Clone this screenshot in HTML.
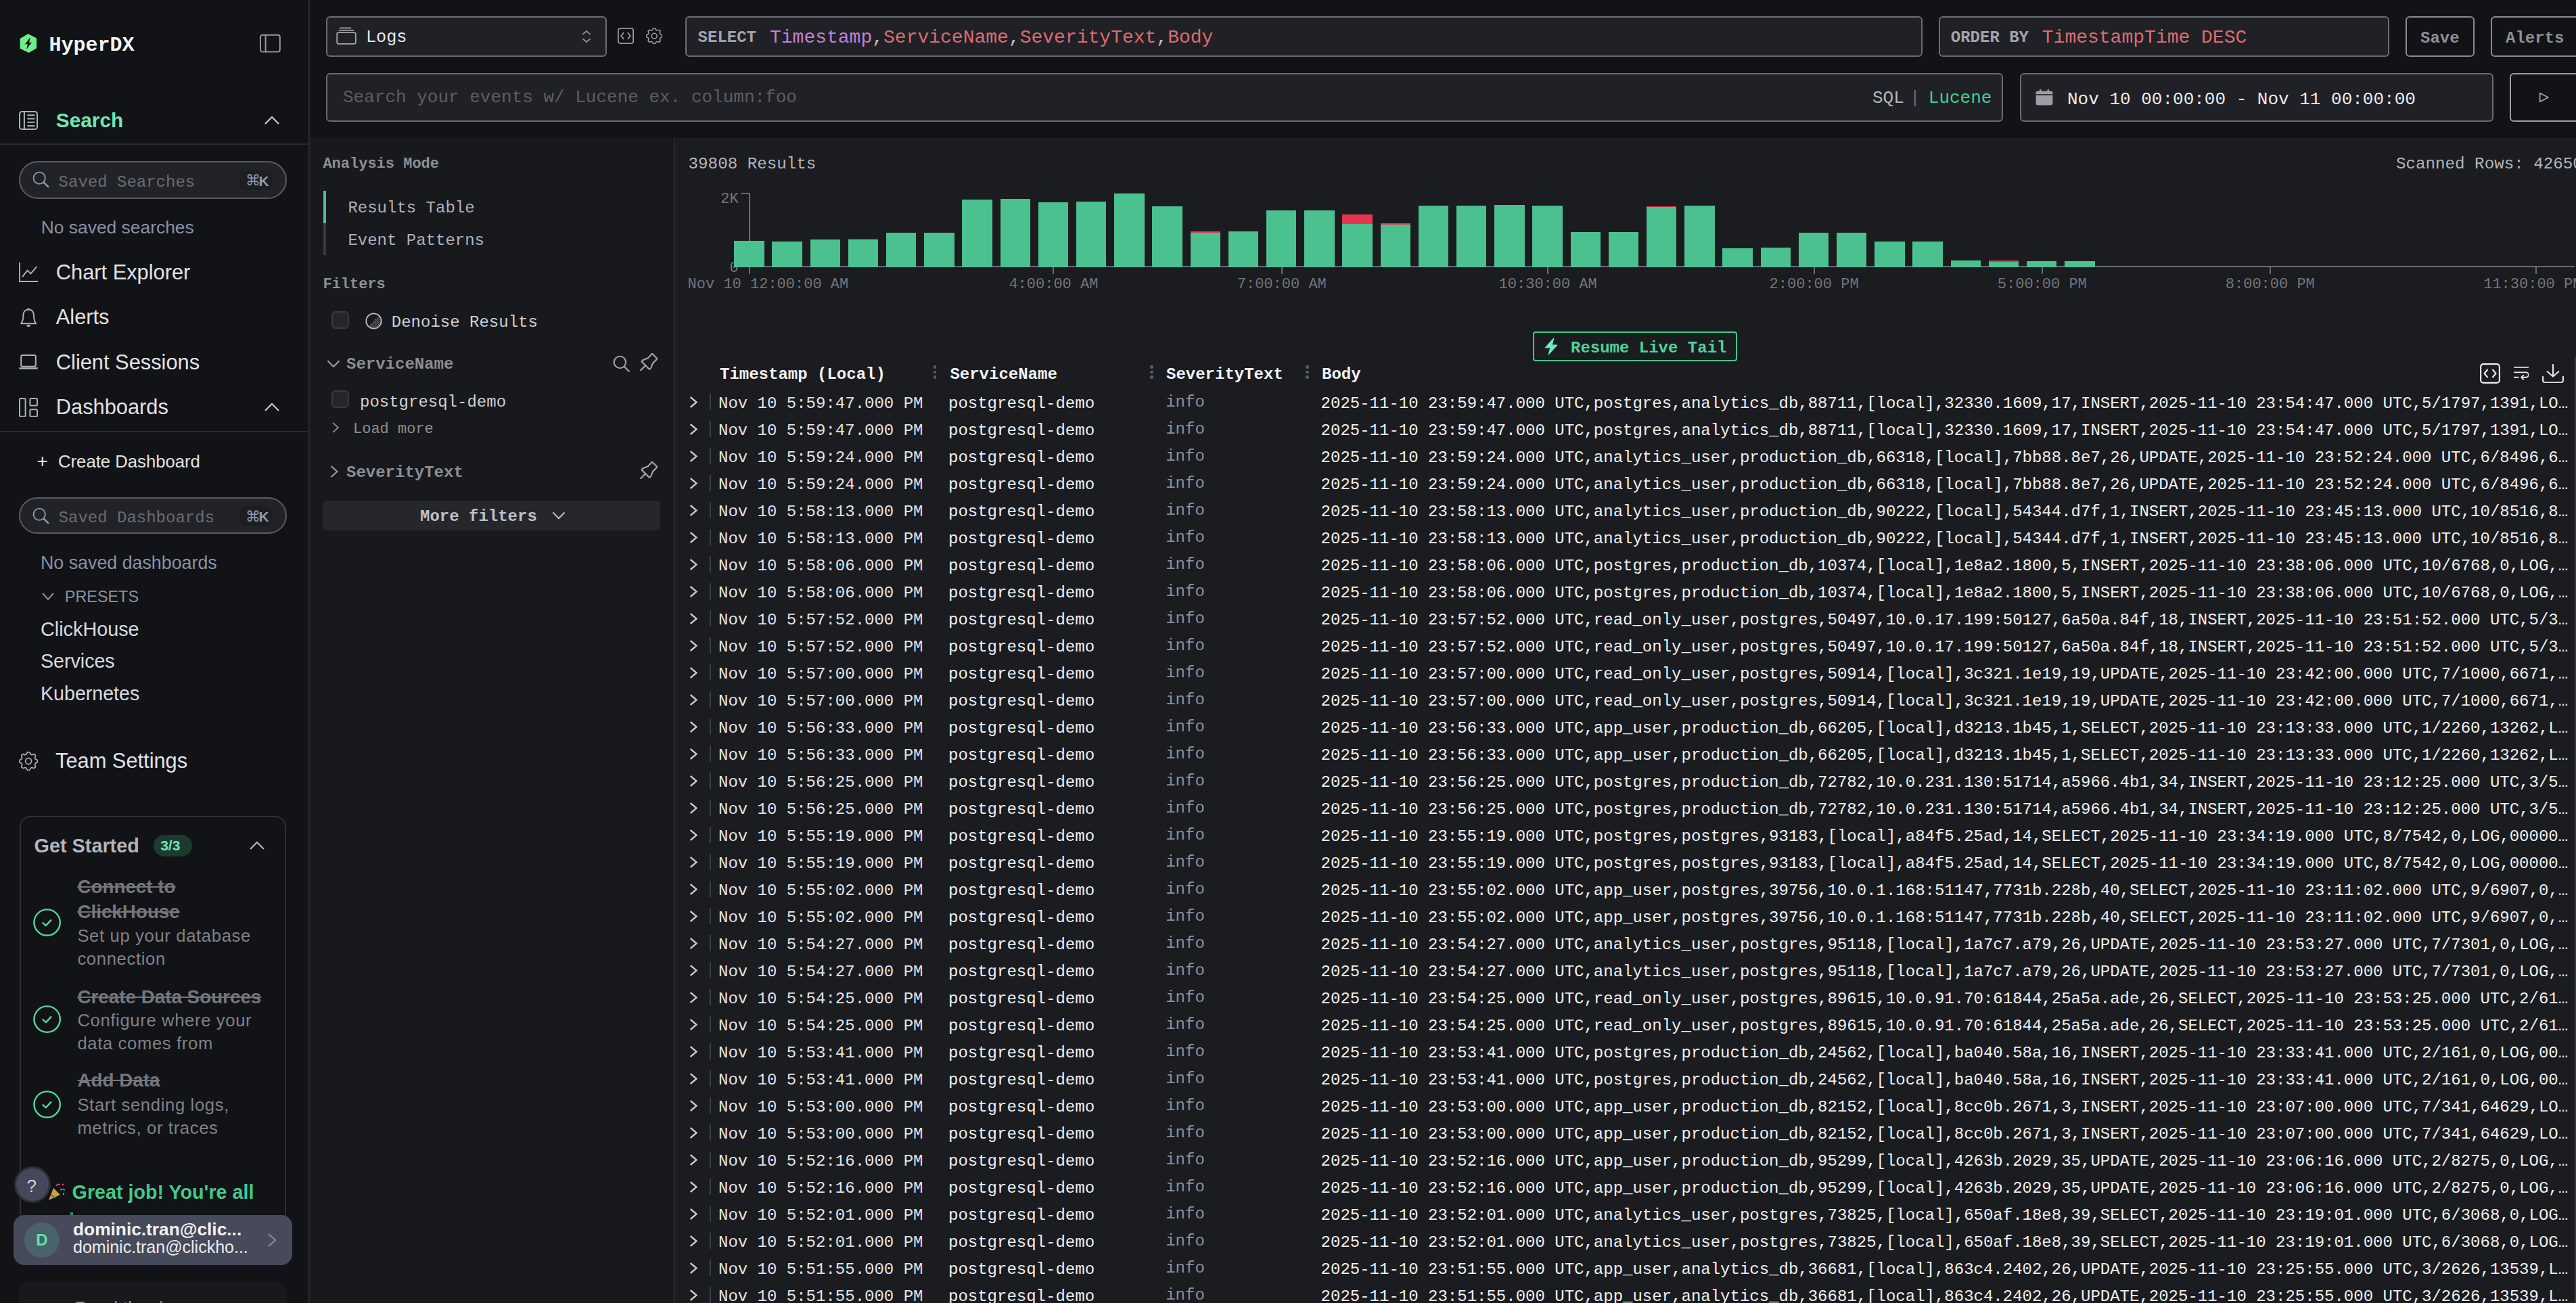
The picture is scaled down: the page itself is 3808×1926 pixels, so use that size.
<!DOCTYPE html>
<html><head><meta charset="utf-8">
<style>
*{box-sizing:border-box;margin:0;padding:0}
html,body{width:3808px;height:1926px;overflow:hidden;background:#121316}
#root{zoom:2;width:1904px;height:963px;position:relative;overflow:hidden;background:#121316;font-family:"Liberation Sans",sans-serif;color:#e6e6e8}
.a{position:absolute}
.t{position:absolute;white-space:nowrap;line-height:1}
@media (max-width:2800px){html,body{width:1904px;height:963px}#root{zoom:1}}
</style></head>
<body><div id="root">

<div class="a" style="left:0.00px;top:0.00px;width:229.00px;height:963.00px;background:#121316"></div>
<div class="a" style="left:228.00px;top:0.00px;width:1.00px;height:963.00px;background:#2a2b30"></div>
<div class="a" style="left:229.00px;top:102.00px;width:1675.00px;height:861.00px;background:#18191c"></div>
<div class="a" style="left:498.50px;top:102.00px;width:1405.50px;height:861.00px;background:#1b1c1f"></div>
<div class="a" style="left:497.80px;top:102.00px;width:1.00px;height:861.00px;background:#2a2b30"></div>
<svg class="a" style="left:14.00px;top:24.00px;" width="14.00" height="16.00" viewBox="14 24 14 16" fill="none"><polygon points="20.82,24.95 27.03,28.29 27.03,35.65 21.28,38.99 14.83,35.88 14.83,28.52" fill="#6fee8a"/><polygon points="22.43,27.48 18.40,32.78 20.47,32.55 19.55,36.46 23.47,31.28 21.51,31.51" fill="#111214"/></svg>
<div class="t " style="left:36.30px;top:25.91px;font-size:15px;font-family:'Liberation Mono',monospace;font-weight:700;color:#f4f4f6;">HyperDX</div>
<svg class="a" style="left:191.00px;top:24.00px;" width="18.00" height="16.00" viewBox="0 0 18 16" fill="none"><rect x="1.5" y="1.9" width="14.4" height="12.4" rx="1.4" stroke="#9a9ba3" stroke-width="0.95"/><line x1="5.3" y1="1.9" x2="5.3" y2="14.3" stroke="#9a9ba3" stroke-width="0.95"/></svg>
<svg class="a" style="left:14.00px;top:82.00px;" width="14.00" height="14.00" viewBox="0 0 14 14" fill="none"><rect x="0.5" y="0.5" width="13" height="13" rx="1.8" stroke="#aab1bd" stroke-width="1"/><line x1="3.95" y1="0.5" x2="3.95" y2="13.5" stroke="#aab1bd" stroke-width="1"/><line x1="6.6" y1="3.1" x2="11.3" y2="3.1" stroke="#aab1bd" stroke-width="1" stroke-linecap="round"/><line x1="6.6" y1="5.7" x2="11.3" y2="5.7" stroke="#aab1bd" stroke-width="1" stroke-linecap="round"/><line x1="6.6" y1="8.4" x2="11.3" y2="8.4" stroke="#aab1bd" stroke-width="1" stroke-linecap="round"/><line x1="6.6" y1="11.0" x2="11.3" y2="11.0" stroke="#aab1bd" stroke-width="1" stroke-linecap="round"/></svg>
<div class="t " style="left:41.40px;top:81.69px;font-size:14.9px;font-family:'Liberation Sans',sans-serif;font-weight:700;color:#6ee7b7;">Search</div>
<svg class="a" style="left:195.00px;top:85.50px;" width="12.00" height="7.00" viewBox="0 0 12 7" fill="none"><polyline points="1,6 6.0,1 11,6" stroke="#d0d0d4" stroke-width="1" fill="none"/></svg>
<div class="a" style="left:0.00px;top:106.00px;width:228.00px;height:1.00px;background:#2a2b30"></div>
<div class="a" style="left:14.20px;top:119.10px;width:197.60px;height:27.90px;background:#222328;border:1px solid #5c5b65;border-radius:14px"></div>
<svg class="a" style="left:24.20px;top:126.70px;" width="12.50" height="12.50" viewBox="0 0 12.5 12.5" fill="none"><circle cx="5.1" cy="5.1" r="4.3" stroke="#8d9cb0" stroke-width="0.9"/><line x1="8.3" y1="8.3" x2="11.6" y2="11.6" stroke="#8d9cb0" stroke-width="1.3" stroke-linecap="round"/></svg>
<div class="t " style="left:43.30px;top:128.91px;font-size:12px;font-family:'Liberation Mono',monospace;color:#6a6b72;">Saved Searches</div>
<div class="a" style="left:177.20px;top:125.80px;width:23.70px;height:14.80px;background:#1d1e22;border-radius:4px"></div>
<div class="t " style="left:181.30px;top:128.09px;font-size:11px;font-family:'Liberation Sans',sans-serif;color:#8d9cb0;">⌘</div>
<div class="t " style="left:191.20px;top:128.51px;font-size:10.5px;font-family:'Liberation Sans',sans-serif;font-weight:700;color:#8d9cb0;">K</div>
<div class="t " style="left:30.40px;top:161.33px;font-size:13.2px;font-family:'Liberation Sans',sans-serif;color:#8891a7;">No saved searches</div>
<svg class="a" style="left:14.00px;top:194.00px;" width="14.00" height="14.50" viewBox="0 0 16 16.5" fill="none"><path d="M0.5 0 V16 H16" stroke="#aab1bd" stroke-width="1.1" fill="none"/><polyline points="2.8,12.2 7.2,6.6 9.9,9.4 15,3.4" stroke="#aab1bd" stroke-width="1.1" fill="none" stroke-linejoin="round"/></svg>
<div class="t " style="left:41.40px;top:193.96px;font-size:15.4px;font-family:'Liberation Sans',sans-serif;color:#e2e2e6;">Chart Explorer</div>
<svg class="a" style="left:15.00px;top:227.40px;" width="12.20" height="14.20" viewBox="0 0 12.2 14.2" fill="none"><path d="M6.1 1.2 C3.4 1.2 2.2 3.3 2.2 5.6 C2.2 8.4 1.6 10.3 0.6 11.6 H11.6 C10.6 10.3 10 8.4 10 5.6 C10 3.3 8.8 1.2 6.1 1.2 Z" stroke="#aab1bd" stroke-width="1" fill="none" stroke-linejoin="round"/><circle cx="6.1" cy="0.9" r="0.8" fill="#aab1bd"/><path d="M4.6 12.6 A1.5 1.5 0 0 0 7.6 12.6 Z" fill="#aab1bd"/></svg>
<div class="t " style="left:41.40px;top:227.16px;font-size:15.4px;font-family:'Liberation Sans',sans-serif;color:#e2e2e6;">Alerts</div>
<svg class="a" style="left:14.00px;top:262.00px;" width="14.00" height="11.50" viewBox="0 0 14 11.5" fill="none"><rect x="1.6" y="0.5" width="10.8" height="8.4" rx="1" stroke="#aab1bd" stroke-width="1" fill="none"/><path d="M0 9.6 H14 A1.2 1.2 0 0 1 12.8 10.9 H1.2 A1.2 1.2 0 0 1 0 9.6Z" fill="#aab1bd"/></svg>
<div class="t " style="left:41.40px;top:260.36px;font-size:15.4px;font-family:'Liberation Sans',sans-serif;color:#e2e2e6;">Client Sessions</div>
<svg class="a" style="left:14.00px;top:293.80px;" width="14.00" height="14.40" viewBox="0 0 14 14.4" fill="none"><rect x="0.5" y="0.5" width="4.3" height="13.4" rx="0.8" stroke="#aab1bd" stroke-width="1" fill="none"/><rect x="8.2" y="0.5" width="5.3" height="5.3" rx="0.8" stroke="#aab1bd" stroke-width="1" fill="none"/><rect x="8.2" y="8.6" width="5.3" height="5.3" rx="0.8" stroke="#aab1bd" stroke-width="1" fill="none"/></svg>
<div class="t " style="left:41.40px;top:293.66px;font-size:15.4px;font-family:'Liberation Sans',sans-serif;color:#e2e2e6;">Dashboards</div>
<svg class="a" style="left:195.00px;top:297.70px;" width="12.00" height="7.00" viewBox="0 0 12 7" fill="none"><polyline points="1,6 6.0,1 11,6" stroke="#d0d0d4" stroke-width="1" fill="none"/></svg>
<div class="a" style="left:0.00px;top:318.40px;width:228.00px;height:1.00px;background:#2a2b30"></div>
<div class="t " style="left:27.20px;top:334.15px;font-size:14px;font-family:'Liberation Sans',sans-serif;color:#e2e2e6;">+</div>
<div class="t " style="left:43.00px;top:335.12px;font-size:12.85px;font-family:'Liberation Sans',sans-serif;color:#e2e2e6;">Create Dashboard</div>
<div class="a" style="left:14.20px;top:367.30px;width:197.60px;height:27.40px;background:#222328;border:1px solid #5c5b65;border-radius:14px"></div>
<svg class="a" style="left:24.20px;top:374.90px;" width="12.50" height="12.50" viewBox="0 0 12.5 12.5" fill="none"><circle cx="5.1" cy="5.1" r="4.3" stroke="#8d9cb0" stroke-width="0.9"/><line x1="8.3" y1="8.3" x2="11.6" y2="11.6" stroke="#8d9cb0" stroke-width="1.3" stroke-linecap="round"/></svg>
<div class="t " style="left:43.30px;top:377.11px;font-size:12px;font-family:'Liberation Mono',monospace;color:#6a6b72;">Saved Dashboards</div>
<div class="a" style="left:177.20px;top:374.00px;width:23.70px;height:14.80px;background:#1d1e22;border-radius:4px"></div>
<div class="t " style="left:181.30px;top:376.29px;font-size:11px;font-family:'Liberation Sans',sans-serif;color:#8d9cb0;">⌘</div>
<div class="t " style="left:191.20px;top:376.71px;font-size:10.5px;font-family:'Liberation Sans',sans-serif;font-weight:700;color:#8d9cb0;">K</div>
<div class="t " style="left:30.00px;top:409.46px;font-size:13.4px;font-family:'Liberation Sans',sans-serif;color:#8891a7;">No saved dashboards</div>
<svg class="a" style="left:30.50px;top:437.50px;" width="10.00" height="7.00" viewBox="0 0 10 7" fill="none"><polyline points="1,1 5,5.5 9,1" stroke="#8891a7" stroke-width="1" fill="none"/></svg>
<div class="t " style="left:47.90px;top:435.40px;font-size:11.7px;font-family:'Liberation Sans',sans-serif;color:#8891a7;">PRESETS</div>
<div class="t " style="left:30.00px;top:458.21px;font-size:14.4px;font-family:'Liberation Sans',sans-serif;color:#d9dbe1;">ClickHouse</div>
<div class="t " style="left:30.00px;top:481.70px;font-size:14.3px;font-family:'Liberation Sans',sans-serif;color:#d9dbe1;">Services</div>
<div class="t " style="left:30.00px;top:505.30px;font-size:14.3px;font-family:'Liberation Sans',sans-serif;color:#d9dbe1;">Kubernetes</div>
<svg class="a" style="left:13.90px;top:555.50px;" width="14.10" height="14.10" viewBox="2.6 2.6 18.8 18.8" fill="none"><path d="M10.325 4.317c.426 -1.756 2.924 -1.756 3.35 0a1.724 1.724 0 0 0 2.573 1.066c1.543 -.94 3.31 .826 2.37 2.37a1.724 1.724 0 0 0 1.065 2.572c1.756 .426 1.756 2.924 0 3.35a1.724 1.724 0 0 0 -1.066 2.573c.94 1.543 -.826 3.31 -2.37 2.37a1.724 1.724 0 0 0 -2.572 1.065c-.426 1.756 -2.924 1.756 -3.35 0a1.724 1.724 0 0 0 -2.573 -1.066c-1.543 .94 -3.31 -.826 -2.37 -2.37a1.724 1.724 0 0 0 -1.065 -2.572c-1.756 -.426 -1.756 -2.924 0 -3.35a1.724 1.724 0 0 0 1.066 -2.573c-.94 -1.543 .826 -3.31 2.37 -2.37c1 .608 2.296 .07 2.572 -1.065z" stroke="#aab1bd" stroke-width="1.13" fill="none" stroke-linejoin="round"/><circle cx="12" cy="12" r="3" stroke="#aab1bd" stroke-width="1.13" fill="none"/></svg>
<div class="t " style="left:41.00px;top:555.16px;font-size:15.4px;font-family:'Liberation Sans',sans-serif;color:#e2e2e6;">Team Settings</div>
<div class="a" style="left:14.30px;top:603.10px;width:197.40px;height:330.00px;border:1px solid #2e2f35;border-radius:8px;background:#121316"></div>
<div class="t " style="left:25.30px;top:618.21px;font-size:14.4px;font-family:'Liberation Sans',sans-serif;font-weight:700;color:#b4b5ba;">Get Started</div>
<div class="a" style="left:113.70px;top:617.10px;width:28.20px;height:15.90px;background:#1d3a2f;border-radius:8px"></div>
<div class="t " style="left:118.60px;top:619.71px;font-size:10.5px;font-family:'Liberation Sans',sans-serif;font-weight:700;color:#6ee7b7;">3/3</div>
<svg class="a" style="left:184.00px;top:621.70px;" width="12.00" height="7.00" viewBox="0 0 12 7" fill="none"><polyline points="1,6 6.0,1 11,6" stroke="#b9b9be" stroke-width="1" fill="none"/></svg>
<svg class="a" style="left:24.70px;top:671.30px;" width="20.60" height="20.60" viewBox="0 0 20.6 20.6" fill="none"><circle cx="10.3" cy="10.3" r="9.6" stroke="#4fd89b" stroke-width="1.2" fill="none"/><polyline points="7.2,10.6 9.4,12.6 13.2,8.6" stroke="#4fd89b" stroke-width="1.2" fill="none" stroke-linecap="round" stroke-linejoin="round"/></svg>
<div class="t " style="left:57.20px;top:648.53px;font-size:13.9px;font-family:'Liberation Sans',sans-serif;font-weight:700;color:#75767d;text-decoration:line-through">Connect to</div>
<div class="t " style="left:57.20px;top:667.13px;font-size:13.9px;font-family:'Liberation Sans',sans-serif;font-weight:700;color:#75767d;text-decoration:line-through">ClickHouse</div>
<div class="t " style="left:57.20px;top:685.36px;font-size:12.8px;font-family:'Liberation Sans',sans-serif;color:#808188;letter-spacing:0.33px">Set up your database</div>
<div class="t " style="left:57.20px;top:702.26px;font-size:12.8px;font-family:'Liberation Sans',sans-serif;color:#808188;letter-spacing:0.33px">connection</div>
<svg class="a" style="left:24.70px;top:743.20px;" width="20.60" height="20.60" viewBox="0 0 20.6 20.6" fill="none"><circle cx="10.3" cy="10.3" r="9.6" stroke="#4fd89b" stroke-width="1.2" fill="none"/><polyline points="7.2,10.6 9.4,12.6 13.2,8.6" stroke="#4fd89b" stroke-width="1.2" fill="none" stroke-linecap="round" stroke-linejoin="round"/></svg>
<div class="t " style="left:57.20px;top:729.93px;font-size:13.9px;font-family:'Liberation Sans',sans-serif;font-weight:700;color:#75767d;text-decoration:line-through">Create Data Sources</div>
<div class="t " style="left:57.20px;top:747.86px;font-size:12.8px;font-family:'Liberation Sans',sans-serif;color:#808188;letter-spacing:0.33px">Configure where your</div>
<div class="t " style="left:57.20px;top:764.76px;font-size:12.8px;font-family:'Liberation Sans',sans-serif;color:#808188;letter-spacing:0.33px">data comes from</div>
<svg class="a" style="left:24.70px;top:805.90px;" width="20.60" height="20.60" viewBox="0 0 20.6 20.6" fill="none"><circle cx="10.3" cy="10.3" r="9.6" stroke="#4fd89b" stroke-width="1.2" fill="none"/><polyline points="7.2,10.6 9.4,12.6 13.2,8.6" stroke="#4fd89b" stroke-width="1.2" fill="none" stroke-linecap="round" stroke-linejoin="round"/></svg>
<div class="t " style="left:57.20px;top:791.43px;font-size:13.9px;font-family:'Liberation Sans',sans-serif;font-weight:700;color:#75767d;text-decoration:line-through">Add Data</div>
<div class="t " style="left:57.20px;top:810.36px;font-size:12.8px;font-family:'Liberation Sans',sans-serif;color:#808188;letter-spacing:0.33px">Start sending logs,</div>
<div class="t " style="left:57.20px;top:827.26px;font-size:12.8px;font-family:'Liberation Sans',sans-serif;color:#808188;letter-spacing:0.33px">metrics, or traces</div>
<svg class="a" style="left:35.50px;top:873.50px;" width="13.00" height="14.00" viewBox="0 0 13 14" fill="none"><path d="M0.5 13.5 L4 4.5 L9 9.5 Z" fill="#c9a23a"/><path d="M2 9.5 L5.5 12" stroke="#6a4fc9" stroke-width="0.8"/><path d="M6 3 Q7 1 9 2" stroke="#e0506a" stroke-width="0.8" fill="none"/><path d="M9 6 Q11 5 12.5 6" stroke="#3d8fe0" stroke-width="0.8" fill="none"/><circle cx="11" cy="2" r="0.6" fill="#e0506a"/><circle cx="11.5" cy="9" r="0.6" fill="#e0a03a"/></svg>
<div class="t " style="left:53.30px;top:874.05px;font-size:14.35px;font-family:'Liberation Sans',sans-serif;font-weight:700;color:#40c98b;">Great job! You&#x27;re all</div>
<div class="a" style="left:52.00px;top:896.00px;width:2.00px;height:2.00px;background:#2f8f62"></div>
<div class="a" style="left:10.30px;top:862.00px;width:27.20px;height:27.20px;background:#45475a;border:1.5px solid #2e2f36;border-radius:50%"></div>
<div class="t " style="left:19.80px;top:869.80px;font-size:13px;font-family:'Liberation Sans',sans-serif;color:#d6d6da;">?</div>
<div class="a" style="left:10.10px;top:898.00px;width:205.90px;height:36.80px;background:#474a5a;border-radius:8px"></div>
<div class="a" style="left:17.90px;top:903.60px;width:26.00px;height:26.00px;background:#4a6268;border-radius:50%"></div>
<div class="t " style="left:26.60px;top:910.64px;font-size:12px;font-family:'Liberation Sans',sans-serif;font-weight:700;color:#5fe3a5;">D</div>
<div class="t " style="left:54.00px;top:901.77px;font-size:13.15px;font-family:'Liberation Sans',sans-serif;font-weight:700;color:#f2f2f4;">dominic.tran@clic...</div>
<div class="t " style="left:54.00px;top:915.72px;font-size:12.5px;font-family:'Liberation Sans',sans-serif;color:#ececef;">dominic.tran@clickho...</div>
<svg class="a" style="left:197.50px;top:911.00px;" width="7.50" height="11.00" viewBox="0 0 7.5 11" fill="none"><polyline points="1,1 6,5.5 1,10" stroke="#8a8e9e" stroke-width="1" fill="none"/></svg>
<div class="a" style="left:13.80px;top:946.90px;width:198.20px;height:40.00px;background:#18191c;border-radius:8px"></div>
<div class="t " style="left:55.00px;top:960.26px;font-size:13.4px;font-family:'Liberation Sans',sans-serif;color:#8d8f96;">Read the docs</div>
<div class="a" style="left:241.00px;top:12.00px;width:207.50px;height:30.00px;background:#202126;border:1px solid #6b6c75;border-radius:3px"></div>
<svg class="a" style="left:248.00px;top:19.00px;" width="16.00" height="15.00" viewBox="248 19 16 15" fill="none"><line x1="251.1" y1="20.7" x2="259.6" y2="20.7" stroke="#a3a4aa" stroke-width="0.9"/><line x1="250.4" y1="22.4" x2="261.4" y2="22.4" stroke="#a3a4aa" stroke-width="0.9"/><rect x="249.1" y="24.1" width="13.8" height="8.3" rx="1.2" stroke="#a3a4aa" stroke-width="0.9" fill="none"/></svg>
<div class="t " style="left:270.50px;top:21.45px;font-size:12.6px;font-family:'Liberation Mono',monospace;color:#e8e8ec;">Logs</div>
<svg class="a" style="left:429.50px;top:22.00px;" width="8.00" height="10.00" viewBox="0 0 8 10" fill="none"><polyline points="1.2,3.4 4,1 6.8,3.4" stroke="#8c8d94" stroke-width="0.9" fill="none"/><polyline points="1.2,6.6 4,9 6.8,6.6" stroke="#8c8d94" stroke-width="0.9" fill="none"/></svg>
<svg class="a" style="left:456.50px;top:20.50px;" width="12.00" height="12.00" viewBox="0 0 12 12" fill="none"><rect x="0.45" y="0.45" width="11.1" height="11.1" rx="1.6" stroke="#9a9ba3" stroke-width="0.9" fill="none"/><polyline points="4.6,3.6 2.6,6 4.6,8.4" stroke="#9a9ba3" stroke-width="0.9" fill="none"/><polyline points="7.4,3.6 9.4,6 7.4,8.4" stroke="#9a9ba3" stroke-width="0.9" fill="none"/></svg>
<svg class="a" style="left:477.40px;top:20.40px;" width="12.20" height="12.20" viewBox="2.6 2.6 18.8 18.8" fill="none"><path d="M10.325 4.317c.426 -1.756 2.924 -1.756 3.35 0a1.724 1.724 0 0 0 2.573 1.066c1.543 -.94 3.31 .826 2.37 2.37a1.724 1.724 0 0 0 1.065 2.572c1.756 .426 1.756 2.924 0 3.35a1.724 1.724 0 0 0 -1.066 2.573c.94 1.543 -.826 3.31 -2.37 2.37a1.724 1.724 0 0 0 -2.572 1.065c-.426 1.756 -2.924 1.756 -3.35 0a1.724 1.724 0 0 0 -2.573 -1.066c-1.543 .94 -3.31 -.826 -2.37 -2.37a1.724 1.724 0 0 0 -1.065 -2.572c-1.756 -.426 -1.756 -2.924 0 -3.35a1.724 1.724 0 0 0 1.066 -2.573c-.94 -1.543 .826 -3.31 2.37 -2.37c1 .608 2.296 .07 2.572 -1.065z" stroke="#9a9ba3" stroke-width="1.23" fill="none" stroke-linejoin="round"/><circle cx="12" cy="12" r="3" stroke="#9a9ba3" stroke-width="1.23" fill="none"/></svg>
<div class="a" style="left:506.50px;top:12.00px;width:914.50px;height:30.00px;background:#202126;border:1px solid #6b6c75;border-radius:3px"></div>
<div class="t " style="left:515.80px;top:22.21px;font-size:12px;font-family:'Liberation Mono',monospace;font-weight:700;color:#a3a4ab;">SELECT</div>
<div class="t " style="left:569.00px;top:21.18px;font-size:14px;font-family:'Liberation Mono',monospace;color:#e6e6e8;"><span style="color:#c37fd6">Timestamp</span><span style="color:#b8bfcb">,</span><span style="color:#de6b70">ServiceName</span><span style="color:#b8bfcb">,</span><span style="color:#de6b70">SeverityText</span><span style="color:#b8bfcb">,</span><span style="color:#de6b70">Body</span></div>
<div class="a" style="left:1433.00px;top:12.00px;width:333.00px;height:30.00px;background:#202126;border:1px solid #6b6c75;border-radius:3px"></div>
<div class="t " style="left:1441.90px;top:22.21px;font-size:12px;font-family:'Liberation Mono',monospace;font-weight:700;color:#a3a4ab;">ORDER BY</div>
<div class="t " style="left:1509.40px;top:21.18px;font-size:14px;font-family:'Liberation Mono',monospace;color:#de6b70;">TimestampTime DESC</div>
<div class="a" style="left:1778.00px;top:12.00px;width:51.00px;height:30.00px;background:#121316;border:1px solid #8b8c93;border-radius:3px"></div>
<div class="t " style="left:1789.00px;top:22.41px;font-size:12px;font-family:'Liberation Mono',monospace;font-weight:700;color:#8e8f96;">Save</div>
<div class="a" style="left:1841.00px;top:12.00px;width:80.00px;height:30.00px;background:#121316;border:1px solid #8b8c93;border-radius:3px"></div>
<div class="t " style="left:1852.00px;top:22.41px;font-size:12px;font-family:'Liberation Mono',monospace;font-weight:700;color:#8e8f96;">Alerts</div>
<div class="a" style="left:241.00px;top:54.00px;width:1239.50px;height:36.00px;background:#202126;border:1px solid #6b6c75;border-radius:3px"></div>
<div class="t " style="left:253.50px;top:65.74px;font-size:13px;font-family:'Liberation Mono',monospace;color:#5c5d65;">Search your events w/ Lucene ex. column:foo</div>
<div class="t " style="left:1384.00px;top:66.24px;font-size:13px;font-family:'Liberation Mono',monospace;color:#b5b6bc;">SQL</div>
<div class="t " style="left:1411.50px;top:66.24px;font-size:13px;font-family:'Liberation Mono',monospace;color:#6b6c73;">|</div>
<div class="t " style="left:1425.40px;top:66.24px;font-size:13px;font-family:'Liberation Mono',monospace;color:#3fd08f;">Lucene</div>
<div class="a" style="left:1493.00px;top:54.00px;width:350.00px;height:36.00px;background:#202126;border:1px solid #6b6c75;border-radius:3px"></div>
<svg class="a" style="left:1504.50px;top:66.00px;" width="13.00" height="12.00" viewBox="0 0 13 12" fill="none"><rect x="0.3" y="1.2" width="12.4" height="10.6" rx="1.5" fill="#9d9ea5"/><rect x="0.3" y="3.6" width="12.4" height="0.8" fill="#202126"/><rect x="3" y="0" width="1.2" height="2.6" rx="0.5" fill="#9d9ea5"/><rect x="8.8" y="0" width="1.2" height="2.6" rx="0.5" fill="#9d9ea5"/></svg>
<div class="t " style="left:1528.00px;top:66.94px;font-size:13px;font-family:'Liberation Mono',monospace;color:#ececef;">Nov 10 00:00:00 - Nov 11 00:00:00</div>
<div class="a" style="left:1855.00px;top:54.00px;width:70.00px;height:36.00px;background:#121316;border:1px solid #9c9da4;border-radius:3px"></div>
<svg class="a" style="left:1876.50px;top:68.20px;" width="8.00" height="8.00" viewBox="0 0 8 8" fill="none"><polygon points="0.8,0.8 7,4 0.8,7.2" stroke="#9c9da4" stroke-width="0.9" fill="none" stroke-linejoin="round"/></svg>
<div class="t " style="left:238.70px;top:116.17px;font-size:11px;font-family:'Liberation Mono',monospace;font-weight:700;color:#8e8f95;">Analysis Mode</div>
<div class="a" style="left:238.90px;top:141.00px;width:2.20px;height:24.00px;background:#48c28f"></div>
<div class="a" style="left:238.90px;top:165.00px;width:2.20px;height:23.50px;background:#393a3f"></div>
<div class="t " style="left:257.20px;top:147.91px;font-size:12px;font-family:'Liberation Mono',monospace;color:#b0b1b7;">Results Table</div>
<div class="t " style="left:257.20px;top:171.81px;font-size:12px;font-family:'Liberation Mono',monospace;color:#b0b1b7;">Event Patterns</div>
<div class="t " style="left:238.70px;top:205.07px;font-size:11px;font-family:'Liberation Mono',monospace;font-weight:700;color:#8e8f95;">Filters</div>
<div class="a" style="left:245.00px;top:229.90px;width:13.00px;height:13.00px;background:#25262b;border:1px solid #3a3b41;border-radius:3px"></div>
<svg class="a" style="left:269.80px;top:231.00px;" width="12.50" height="12.50" viewBox="0 0 12.5 12.5" fill="none"><defs><pattern id="hp" width="1" height="1" patternUnits="userSpaceOnUse" patternTransform="rotate(45)"><rect width="0.5" height="0.5" fill="#b0b1b7"/></pattern></defs><circle cx="6.25" cy="6.25" r="5.6" stroke="#b9bac0" stroke-width="0.9" fill="none"/><path d="M10.2 2.3 A5.6 5.6 0 0 1 2.3 10.2 Z" fill="url(#hp)"/></svg>
<div class="t " style="left:289.40px;top:232.41px;font-size:12px;font-family:'Liberation Mono',monospace;color:#d0d1d6;">Denoise Results</div>
<svg class="a" style="left:241.00px;top:265.00px;" width="11.00" height="8.00" viewBox="0 0 11 8" fill="none"><polyline points="1.2,1.6 5.5,6 9.8,1.6" stroke="#a0a1a8" stroke-width="1" fill="none"/></svg>
<div class="t " style="left:256.00px;top:263.41px;font-size:12px;font-family:'Liberation Mono',monospace;font-weight:700;color:#8c8d95;">ServiceName</div>
<svg class="a" style="left:452.80px;top:262.30px;" width="12.50" height="12.50" viewBox="0 0 12 12" fill="none"><circle cx="5" cy="5" r="4.2" stroke="#a0a1a8" stroke-width="1" fill="none"/><line x1="8.1" y1="8.1" x2="11.4" y2="11.4" stroke="#a0a1a8" stroke-width="1.1" stroke-linecap="round"/></svg>
<svg class="a" style="left:472.90px;top:261.00px;" width="13.20" height="13.20" viewBox="4 4 16 16" fill="none"><path d="M15 4.5l-4 4l-4 1.5l-1.5 1.5l7 7l1.5 -1.5l1.5 -4l4 -4" stroke="#a0a1a8" stroke-width="1.35" fill="none" stroke-linejoin="round" stroke-linecap="round"/><path d="M9 15l-4.5 4.5" stroke="#a0a1a8" stroke-width="1.35" stroke-linecap="round"/><path d="M14.5 4l5.5 5.5" stroke="#a0a1a8" stroke-width="1.35" stroke-linecap="round"/></svg>
<div class="a" style="left:245.00px;top:288.30px;width:13.00px;height:13.00px;background:#25262b;border:1px solid #3a3b41;border-radius:3px"></div>
<div class="t " style="left:266.00px;top:291.51px;font-size:12px;font-family:'Liberation Mono',monospace;color:#d0d1d6;">postgresql-demo</div>
<svg class="a" style="left:244.50px;top:311.50px;" width="7.00" height="9.00" viewBox="0 0 7 9" fill="none"><polyline points="1.5,1 5.5,4.5 1.5,8" stroke="#8c8d94" stroke-width="0.9" fill="none"/></svg>
<div class="t " style="left:261.00px;top:311.87px;font-size:11px;font-family:'Liberation Mono',monospace;color:#8c8d94;">Load more</div>
<svg class="a" style="left:243.00px;top:343.50px;" width="8.00" height="10.00" viewBox="0 0 8 10" fill="none"><polyline points="1.8,1 6.2,5 1.8,9" stroke="#a0a1a8" stroke-width="1" fill="none"/></svg>
<div class="t " style="left:256.00px;top:343.61px;font-size:12px;font-family:'Liberation Mono',monospace;font-weight:700;color:#8c8d95;">SeverityText</div>
<svg class="a" style="left:472.90px;top:341.00px;" width="13.20" height="13.20" viewBox="4 4 16 16" fill="none"><path d="M15 4.5l-4 4l-4 1.5l-1.5 1.5l7 7l1.5 -1.5l1.5 -4l4 -4" stroke="#a0a1a8" stroke-width="1.35" fill="none" stroke-linejoin="round" stroke-linecap="round"/><path d="M9 15l-4.5 4.5" stroke="#a0a1a8" stroke-width="1.35" stroke-linecap="round"/><path d="M14.5 4l5.5 5.5" stroke="#a0a1a8" stroke-width="1.35" stroke-linecap="round"/></svg>
<div class="a" style="left:238.70px;top:369.80px;width:249.10px;height:22.10px;background:#26272c;border-radius:3px"></div>
<div class="t " style="left:310.50px;top:376.01px;font-size:12px;font-family:'Liberation Mono',monospace;font-weight:700;color:#c0c1c7;">More filters</div>
<svg class="a" style="left:407.50px;top:377.50px;" width="11.00" height="7.00" viewBox="0 0 11 7" fill="none"><polyline points="1.2,1.2 5.5,5.6 9.8,1.2" stroke="#c0c1c7" stroke-width="1" fill="none"/></svg>
<div class="t " style="left:508.80px;top:115.63px;font-size:12.1px;font-family:'Liberation Mono',monospace;color:#b4b5bb;">39808 Results</div>
<div class="t " style="left:1771.00px;top:115.43px;font-size:12.1px;font-family:'Liberation Mono',monospace;color:#b4b5bb;">Scanned Rows: 426500</div>
<div class="a" style="left:553.30px;top:196.60px;width:1349.70px;height:1.00px;background:#6a6b72"></div>
<div class="a" style="left:553.30px;top:197.00px;width:1.00px;height:5.40px;background:#6a6b72"></div>
<div class="t " style="left:508.30px;top:204.87px;font-size:11px;font-family:'Liberation Mono',monospace;color:#74757c;">Nov 10 12:00:00 AM</div>
<div class="a" style="left:778.20px;top:197.00px;width:1.00px;height:5.40px;background:#6a6b72"></div>
<div class="t " style="left:745.70px;top:204.87px;font-size:11px;font-family:'Liberation Mono',monospace;color:#74757c;">4:00:00 AM</div>
<div class="a" style="left:946.90px;top:197.00px;width:1.00px;height:5.40px;background:#6a6b72"></div>
<div class="t " style="left:914.40px;top:204.87px;font-size:11px;font-family:'Liberation Mono',monospace;color:#74757c;">7:00:00 AM</div>
<div class="a" style="left:1143.60px;top:197.00px;width:1.00px;height:5.40px;background:#6a6b72"></div>
<div class="t " style="left:1107.80px;top:204.87px;font-size:11px;font-family:'Liberation Mono',monospace;color:#74757c;">10:30:00 AM</div>
<div class="a" style="left:1340.30px;top:197.00px;width:1.00px;height:5.40px;background:#6a6b72"></div>
<div class="t " style="left:1307.80px;top:204.87px;font-size:11px;font-family:'Liberation Mono',monospace;color:#74757c;">2:00:00 PM</div>
<div class="a" style="left:1508.90px;top:197.00px;width:1.00px;height:5.40px;background:#6a6b72"></div>
<div class="t " style="left:1476.40px;top:204.87px;font-size:11px;font-family:'Liberation Mono',monospace;color:#74757c;">5:00:00 PM</div>
<div class="a" style="left:1677.40px;top:197.00px;width:1.00px;height:5.40px;background:#6a6b72"></div>
<div class="t " style="left:1644.90px;top:204.87px;font-size:11px;font-family:'Liberation Mono',monospace;color:#74757c;">8:00:00 PM</div>
<div class="a" style="left:1874.10px;top:197.00px;width:1.00px;height:5.40px;background:#6a6b72"></div>
<div class="t " style="left:1835.60px;top:204.87px;font-size:11px;font-family:'Liberation Mono',monospace;color:#74757c;">11:30:00 PM</div>
<div class="a" style="left:553.30px;top:142.50px;width:1.00px;height:55.00px;background:#6a6b72"></div>
<div class="a" style="left:548.00px;top:142.50px;width:5.80px;height:1.00px;background:#6a6b72"></div>
<div class="t " style="left:532.60px;top:142.17px;font-size:11px;font-family:'Liberation Mono',monospace;color:#74757c;">2K</div>
<div class="t " style="left:539.20px;top:192.87px;font-size:11px;font-family:'Liberation Mono',monospace;color:#74757c;">0</div>
<div class="a" style="left:542.60px;top:178.20px;width:22.20px;height:19.20px;background:#4bc190"></div>
<div class="a" style="left:570.70px;top:178.30px;width:22.20px;height:19.10px;background:#4bc190"></div>
<div class="a" style="left:598.80px;top:176.90px;width:22.20px;height:20.50px;background:#4bc190"></div>
<div class="a" style="left:626.90px;top:176.50px;width:22.20px;height:20.90px;background:#4bc190"></div>
<div class="a" style="left:626.90px;top:176.50px;width:22.20px;height:1.00px;background:#e5354f"></div>
<div class="a" style="left:655.00px;top:171.80px;width:22.20px;height:25.60px;background:#4bc190"></div>
<div class="a" style="left:683.10px;top:171.90px;width:22.20px;height:25.50px;background:#4bc190"></div>
<div class="a" style="left:711.20px;top:147.50px;width:22.20px;height:49.90px;background:#4bc190"></div>
<div class="a" style="left:739.30px;top:147.10px;width:22.20px;height:50.30px;background:#4bc190"></div>
<div class="a" style="left:767.40px;top:149.40px;width:22.20px;height:48.00px;background:#4bc190"></div>
<div class="a" style="left:795.50px;top:148.80px;width:22.20px;height:48.60px;background:#4bc190"></div>
<div class="a" style="left:823.60px;top:143.10px;width:22.20px;height:54.30px;background:#4bc190"></div>
<div class="a" style="left:851.70px;top:152.60px;width:22.20px;height:44.80px;background:#4bc190"></div>
<div class="a" style="left:879.80px;top:171.20px;width:22.20px;height:26.20px;background:#4bc190"></div>
<div class="a" style="left:879.80px;top:171.20px;width:22.20px;height:0.80px;background:#e5354f"></div>
<div class="a" style="left:907.90px;top:171.20px;width:22.20px;height:26.20px;background:#4bc190"></div>
<div class="a" style="left:936.00px;top:155.30px;width:22.20px;height:42.10px;background:#4bc190"></div>
<div class="a" style="left:964.10px;top:155.50px;width:22.20px;height:41.90px;background:#4bc190"></div>
<div class="a" style="left:992.20px;top:158.40px;width:22.20px;height:39.00px;background:#4bc190"></div>
<div class="a" style="left:992.20px;top:158.40px;width:22.20px;height:7.10px;background:#e5354f"></div>
<div class="a" style="left:1020.30px;top:164.90px;width:22.20px;height:32.50px;background:#4bc190"></div>
<div class="a" style="left:1020.30px;top:164.90px;width:22.20px;height:1.00px;background:#e5354f"></div>
<div class="a" style="left:1048.40px;top:152.20px;width:22.20px;height:45.20px;background:#4bc190"></div>
<div class="a" style="left:1076.50px;top:152.20px;width:22.20px;height:45.20px;background:#4bc190"></div>
<div class="a" style="left:1104.60px;top:151.40px;width:22.20px;height:46.00px;background:#4bc190"></div>
<div class="a" style="left:1132.70px;top:152.00px;width:22.20px;height:45.40px;background:#4bc190"></div>
<div class="a" style="left:1160.80px;top:171.60px;width:22.20px;height:25.80px;background:#4bc190"></div>
<div class="a" style="left:1188.90px;top:171.40px;width:22.20px;height:26.00px;background:#4bc190"></div>
<div class="a" style="left:1217.00px;top:152.40px;width:22.20px;height:45.00px;background:#4bc190"></div>
<div class="a" style="left:1217.00px;top:152.40px;width:22.20px;height:0.70px;background:#e5354f"></div>
<div class="a" style="left:1245.10px;top:152.20px;width:22.20px;height:45.20px;background:#4bc190"></div>
<div class="a" style="left:1273.20px;top:183.30px;width:22.20px;height:14.10px;background:#4bc190"></div>
<div class="a" style="left:1301.30px;top:182.90px;width:22.20px;height:14.50px;background:#4bc190"></div>
<div class="a" style="left:1329.40px;top:172.00px;width:22.20px;height:25.40px;background:#4bc190"></div>
<div class="a" style="left:1357.50px;top:172.00px;width:22.20px;height:25.40px;background:#4bc190"></div>
<div class="a" style="left:1385.60px;top:178.40px;width:22.20px;height:19.00px;background:#4bc190"></div>
<div class="a" style="left:1413.70px;top:178.40px;width:22.20px;height:19.00px;background:#4bc190"></div>
<div class="a" style="left:1441.80px;top:192.70px;width:22.20px;height:4.70px;background:#4bc190"></div>
<div class="a" style="left:1469.90px;top:192.70px;width:22.20px;height:4.70px;background:#4bc190"></div>
<div class="a" style="left:1469.90px;top:192.70px;width:22.20px;height:0.80px;background:#e5354f"></div>
<div class="a" style="left:1498.00px;top:193.00px;width:22.20px;height:4.40px;background:#4bc190"></div>
<div class="a" style="left:1526.10px;top:193.00px;width:22.20px;height:4.40px;background:#4bc190"></div>
<div class="a" style="left:1133.20px;top:245.10px;width:150.60px;height:21.80px;border:1px solid #3fc98b;border-radius:2px"></div>
<svg class="a" style="left:1141.20px;top:249.60px;" width="11.00" height="13.00" viewBox="0 0 11 13" fill="none"><path d="M7.4 0.6 L1.2 7.4 H5 L3.6 12.4 L9.8 5.6 H6 Z" fill="#6becbc" stroke="#6becbc" stroke-width="0.6" stroke-linejoin="round"/></svg>
<div class="t " style="left:1161.00px;top:251.71px;font-size:12px;font-family:'Liberation Mono',monospace;font-weight:700;color:#4bd699;">Resume Live Tail</div>
<div class="t " style="left:532.00px;top:271.21px;font-size:12px;font-family:'Liberation Mono',monospace;font-weight:700;color:#f2f2f4;">Timestamp (Local)</div>
<div class="t " style="left:702.20px;top:271.21px;font-size:12px;font-family:'Liberation Mono',monospace;font-weight:700;color:#f2f2f4;">ServiceName</div>
<div class="t " style="left:862.00px;top:271.21px;font-size:12px;font-family:'Liberation Mono',monospace;font-weight:700;color:#f2f2f4;">SeverityText</div>
<div class="t " style="left:977.00px;top:271.21px;font-size:12px;font-family:'Liberation Mono',monospace;font-weight:700;color:#f2f2f4;">Body</div>
<div class="a" style="left:690.00px;top:270.20px;width:2.20px;height:2.20px;background:#56616b;border-radius:50%"></div>
<div class="a" style="left:690.00px;top:273.90px;width:2.20px;height:2.20px;background:#56616b;border-radius:50%"></div>
<div class="a" style="left:690.00px;top:277.60px;width:2.20px;height:2.20px;background:#56616b;border-radius:50%"></div>
<div class="a" style="left:850.20px;top:270.20px;width:2.20px;height:2.20px;background:#56616b;border-radius:50%"></div>
<div class="a" style="left:850.20px;top:273.90px;width:2.20px;height:2.20px;background:#56616b;border-radius:50%"></div>
<div class="a" style="left:850.20px;top:277.60px;width:2.20px;height:2.20px;background:#56616b;border-radius:50%"></div>
<div class="a" style="left:965.10px;top:270.20px;width:2.20px;height:2.20px;background:#56616b;border-radius:50%"></div>
<div class="a" style="left:965.10px;top:273.90px;width:2.20px;height:2.20px;background:#56616b;border-radius:50%"></div>
<div class="a" style="left:965.10px;top:277.60px;width:2.20px;height:2.20px;background:#56616b;border-radius:50%"></div>
<svg class="a" style="left:1833.00px;top:268.50px;" width="15.00" height="15.00" viewBox="0 0 12 12" fill="none"><rect x="0.45" y="0.45" width="11.1" height="11.1" rx="1.6" stroke="#efeff1" stroke-width="0.85" fill="none"/><polyline points="4.6,3.6 2.6,6 4.6,8.4" stroke="#efeff1" stroke-width="0.85" fill="none"/><polyline points="7.4,3.6 9.4,6 7.4,8.4" stroke="#efeff1" stroke-width="0.85" fill="none"/></svg>
<svg class="a" style="left:1857.90px;top:271.10px;" width="11.30" height="9.90" viewBox="2.25 4.25 19.5 16" preserveAspectRatio="none" fill="none"><path d="M3 5 H21 M3 11 H18 A3 3 0 0 1 18 17 H12 M14.5 14.5 L12 17 L14.5 19.5 M3 17 H8" stroke="#ececee" stroke-width="1.5" fill="none" stroke-linecap="round" stroke-linejoin="round"/></svg>
<svg class="a" style="left:1879.00px;top:269.00px;" width="16.00" height="14.20" viewBox="2.35 2.35 19.3 19.3" preserveAspectRatio="none" fill="none"><path d="M3 15 V19 A2 2 0 0 0 5 21 H19 A2 2 0 0 0 21 19 V15 M7 10 L12 15 L17 10 M12 3 V15" stroke="#e6e6e8" stroke-width="1.3" fill="none" stroke-linecap="round" stroke-linejoin="round"/></svg>
<div class="a" style="left:1903.00px;top:264.00px;width:1.00px;height:699.00px;background:#3a3b40"></div>
<svg class="a" style="left:509.00px;top:292.40px;" width="7.50" height="9.50" viewBox="0 0 7.5 9.5" fill="none"><polyline points="1.3,1 5.8,4.75 1.3,8.5" stroke="#c9cace" stroke-width="1.15" fill="none"/></svg>
<div class="a" style="left:524.30px;top:291.00px;width:1.00px;height:12.00px;background:#364250"></div>
<div class="t " style="left:531.00px;top:292.41px;font-size:12px;font-family:'Liberation Mono',monospace;color:#e4e4e8;">Nov 10 5:59:47.000 PM</div>
<div class="t " style="left:701.00px;top:292.41px;font-size:12px;font-family:'Liberation Mono',monospace;color:#f0f0f2;">postgresql-demo</div>
<div class="t " style="left:861.60px;top:291.41px;font-size:12px;font-family:'Liberation Mono',monospace;color:#8f9097;">info</div>
<div class="t " style="left:976.30px;top:292.41px;font-size:12px;font-family:'Liberation Mono',monospace;color:#f0f0f2;">2025-11-10 23:59:47.000 UTC,postgres,analytics_db,88711,[local],32330.1609,17,INSERT,2025-11-10 23:54:47.000 UTC,5/1797,1391,LO…</div>
<svg class="a" style="left:509.00px;top:312.40px;" width="7.50" height="9.50" viewBox="0 0 7.5 9.5" fill="none"><polyline points="1.3,1 5.8,4.75 1.3,8.5" stroke="#c9cace" stroke-width="1.15" fill="none"/></svg>
<div class="a" style="left:524.30px;top:311.00px;width:1.00px;height:12.00px;background:#364250"></div>
<div class="t " style="left:531.00px;top:312.41px;font-size:12px;font-family:'Liberation Mono',monospace;color:#e4e4e8;">Nov 10 5:59:47.000 PM</div>
<div class="t " style="left:701.00px;top:312.41px;font-size:12px;font-family:'Liberation Mono',monospace;color:#f0f0f2;">postgresql-demo</div>
<div class="t " style="left:861.60px;top:311.41px;font-size:12px;font-family:'Liberation Mono',monospace;color:#8f9097;">info</div>
<div class="t " style="left:976.30px;top:312.41px;font-size:12px;font-family:'Liberation Mono',monospace;color:#f0f0f2;">2025-11-10 23:59:47.000 UTC,postgres,analytics_db,88711,[local],32330.1609,17,INSERT,2025-11-10 23:54:47.000 UTC,5/1797,1391,LO…</div>
<svg class="a" style="left:509.00px;top:332.40px;" width="7.50" height="9.50" viewBox="0 0 7.5 9.5" fill="none"><polyline points="1.3,1 5.8,4.75 1.3,8.5" stroke="#c9cace" stroke-width="1.15" fill="none"/></svg>
<div class="a" style="left:524.30px;top:331.00px;width:1.00px;height:12.00px;background:#364250"></div>
<div class="t " style="left:531.00px;top:332.41px;font-size:12px;font-family:'Liberation Mono',monospace;color:#e4e4e8;">Nov 10 5:59:24.000 PM</div>
<div class="t " style="left:701.00px;top:332.41px;font-size:12px;font-family:'Liberation Mono',monospace;color:#f0f0f2;">postgresql-demo</div>
<div class="t " style="left:861.60px;top:331.41px;font-size:12px;font-family:'Liberation Mono',monospace;color:#8f9097;">info</div>
<div class="t " style="left:976.30px;top:332.41px;font-size:12px;font-family:'Liberation Mono',monospace;color:#f0f0f2;">2025-11-10 23:59:24.000 UTC,analytics_user,production_db,66318,[local],7bb88.8e7,26,UPDATE,2025-11-10 23:52:24.000 UTC,6/8496,6…</div>
<svg class="a" style="left:509.00px;top:352.40px;" width="7.50" height="9.50" viewBox="0 0 7.5 9.5" fill="none"><polyline points="1.3,1 5.8,4.75 1.3,8.5" stroke="#c9cace" stroke-width="1.15" fill="none"/></svg>
<div class="a" style="left:524.30px;top:351.00px;width:1.00px;height:12.00px;background:#364250"></div>
<div class="t " style="left:531.00px;top:352.41px;font-size:12px;font-family:'Liberation Mono',monospace;color:#e4e4e8;">Nov 10 5:59:24.000 PM</div>
<div class="t " style="left:701.00px;top:352.41px;font-size:12px;font-family:'Liberation Mono',monospace;color:#f0f0f2;">postgresql-demo</div>
<div class="t " style="left:861.60px;top:351.41px;font-size:12px;font-family:'Liberation Mono',monospace;color:#8f9097;">info</div>
<div class="t " style="left:976.30px;top:352.41px;font-size:12px;font-family:'Liberation Mono',monospace;color:#f0f0f2;">2025-11-10 23:59:24.000 UTC,analytics_user,production_db,66318,[local],7bb88.8e7,26,UPDATE,2025-11-10 23:52:24.000 UTC,6/8496,6…</div>
<svg class="a" style="left:509.00px;top:372.40px;" width="7.50" height="9.50" viewBox="0 0 7.5 9.5" fill="none"><polyline points="1.3,1 5.8,4.75 1.3,8.5" stroke="#c9cace" stroke-width="1.15" fill="none"/></svg>
<div class="a" style="left:524.30px;top:371.00px;width:1.00px;height:12.00px;background:#364250"></div>
<div class="t " style="left:531.00px;top:372.41px;font-size:12px;font-family:'Liberation Mono',monospace;color:#e4e4e8;">Nov 10 5:58:13.000 PM</div>
<div class="t " style="left:701.00px;top:372.41px;font-size:12px;font-family:'Liberation Mono',monospace;color:#f0f0f2;">postgresql-demo</div>
<div class="t " style="left:861.60px;top:371.41px;font-size:12px;font-family:'Liberation Mono',monospace;color:#8f9097;">info</div>
<div class="t " style="left:976.30px;top:372.41px;font-size:12px;font-family:'Liberation Mono',monospace;color:#f0f0f2;">2025-11-10 23:58:13.000 UTC,analytics_user,production_db,90222,[local],54344.d7f,1,INSERT,2025-11-10 23:45:13.000 UTC,10/8516,8…</div>
<svg class="a" style="left:509.00px;top:392.40px;" width="7.50" height="9.50" viewBox="0 0 7.5 9.5" fill="none"><polyline points="1.3,1 5.8,4.75 1.3,8.5" stroke="#c9cace" stroke-width="1.15" fill="none"/></svg>
<div class="a" style="left:524.30px;top:391.00px;width:1.00px;height:12.00px;background:#364250"></div>
<div class="t " style="left:531.00px;top:392.41px;font-size:12px;font-family:'Liberation Mono',monospace;color:#e4e4e8;">Nov 10 5:58:13.000 PM</div>
<div class="t " style="left:701.00px;top:392.41px;font-size:12px;font-family:'Liberation Mono',monospace;color:#f0f0f2;">postgresql-demo</div>
<div class="t " style="left:861.60px;top:391.41px;font-size:12px;font-family:'Liberation Mono',monospace;color:#8f9097;">info</div>
<div class="t " style="left:976.30px;top:392.41px;font-size:12px;font-family:'Liberation Mono',monospace;color:#f0f0f2;">2025-11-10 23:58:13.000 UTC,analytics_user,production_db,90222,[local],54344.d7f,1,INSERT,2025-11-10 23:45:13.000 UTC,10/8516,8…</div>
<svg class="a" style="left:509.00px;top:412.40px;" width="7.50" height="9.50" viewBox="0 0 7.5 9.5" fill="none"><polyline points="1.3,1 5.8,4.75 1.3,8.5" stroke="#c9cace" stroke-width="1.15" fill="none"/></svg>
<div class="a" style="left:524.30px;top:411.00px;width:1.00px;height:12.00px;background:#364250"></div>
<div class="t " style="left:531.00px;top:412.41px;font-size:12px;font-family:'Liberation Mono',monospace;color:#e4e4e8;">Nov 10 5:58:06.000 PM</div>
<div class="t " style="left:701.00px;top:412.41px;font-size:12px;font-family:'Liberation Mono',monospace;color:#f0f0f2;">postgresql-demo</div>
<div class="t " style="left:861.60px;top:411.41px;font-size:12px;font-family:'Liberation Mono',monospace;color:#8f9097;">info</div>
<div class="t " style="left:976.30px;top:412.41px;font-size:12px;font-family:'Liberation Mono',monospace;color:#f0f0f2;">2025-11-10 23:58:06.000 UTC,postgres,production_db,10374,[local],1e8a2.1800,5,INSERT,2025-11-10 23:38:06.000 UTC,10/6768,0,LOG,…</div>
<svg class="a" style="left:509.00px;top:432.40px;" width="7.50" height="9.50" viewBox="0 0 7.5 9.5" fill="none"><polyline points="1.3,1 5.8,4.75 1.3,8.5" stroke="#c9cace" stroke-width="1.15" fill="none"/></svg>
<div class="a" style="left:524.30px;top:431.00px;width:1.00px;height:12.00px;background:#364250"></div>
<div class="t " style="left:531.00px;top:432.41px;font-size:12px;font-family:'Liberation Mono',monospace;color:#e4e4e8;">Nov 10 5:58:06.000 PM</div>
<div class="t " style="left:701.00px;top:432.41px;font-size:12px;font-family:'Liberation Mono',monospace;color:#f0f0f2;">postgresql-demo</div>
<div class="t " style="left:861.60px;top:431.41px;font-size:12px;font-family:'Liberation Mono',monospace;color:#8f9097;">info</div>
<div class="t " style="left:976.30px;top:432.41px;font-size:12px;font-family:'Liberation Mono',monospace;color:#f0f0f2;">2025-11-10 23:58:06.000 UTC,postgres,production_db,10374,[local],1e8a2.1800,5,INSERT,2025-11-10 23:38:06.000 UTC,10/6768,0,LOG,…</div>
<svg class="a" style="left:509.00px;top:452.40px;" width="7.50" height="9.50" viewBox="0 0 7.5 9.5" fill="none"><polyline points="1.3,1 5.8,4.75 1.3,8.5" stroke="#c9cace" stroke-width="1.15" fill="none"/></svg>
<div class="a" style="left:524.30px;top:451.00px;width:1.00px;height:12.00px;background:#364250"></div>
<div class="t " style="left:531.00px;top:452.41px;font-size:12px;font-family:'Liberation Mono',monospace;color:#e4e4e8;">Nov 10 5:57:52.000 PM</div>
<div class="t " style="left:701.00px;top:452.41px;font-size:12px;font-family:'Liberation Mono',monospace;color:#f0f0f2;">postgresql-demo</div>
<div class="t " style="left:861.60px;top:451.41px;font-size:12px;font-family:'Liberation Mono',monospace;color:#8f9097;">info</div>
<div class="t " style="left:976.30px;top:452.41px;font-size:12px;font-family:'Liberation Mono',monospace;color:#f0f0f2;">2025-11-10 23:57:52.000 UTC,read_only_user,postgres,50497,10.0.17.199:50127,6a50a.84f,18,INSERT,2025-11-10 23:51:52.000 UTC,5/3…</div>
<svg class="a" style="left:509.00px;top:472.40px;" width="7.50" height="9.50" viewBox="0 0 7.5 9.5" fill="none"><polyline points="1.3,1 5.8,4.75 1.3,8.5" stroke="#c9cace" stroke-width="1.15" fill="none"/></svg>
<div class="a" style="left:524.30px;top:471.00px;width:1.00px;height:12.00px;background:#364250"></div>
<div class="t " style="left:531.00px;top:472.41px;font-size:12px;font-family:'Liberation Mono',monospace;color:#e4e4e8;">Nov 10 5:57:52.000 PM</div>
<div class="t " style="left:701.00px;top:472.41px;font-size:12px;font-family:'Liberation Mono',monospace;color:#f0f0f2;">postgresql-demo</div>
<div class="t " style="left:861.60px;top:471.41px;font-size:12px;font-family:'Liberation Mono',monospace;color:#8f9097;">info</div>
<div class="t " style="left:976.30px;top:472.41px;font-size:12px;font-family:'Liberation Mono',monospace;color:#f0f0f2;">2025-11-10 23:57:52.000 UTC,read_only_user,postgres,50497,10.0.17.199:50127,6a50a.84f,18,INSERT,2025-11-10 23:51:52.000 UTC,5/3…</div>
<svg class="a" style="left:509.00px;top:492.40px;" width="7.50" height="9.50" viewBox="0 0 7.5 9.5" fill="none"><polyline points="1.3,1 5.8,4.75 1.3,8.5" stroke="#c9cace" stroke-width="1.15" fill="none"/></svg>
<div class="a" style="left:524.30px;top:491.00px;width:1.00px;height:12.00px;background:#364250"></div>
<div class="t " style="left:531.00px;top:492.41px;font-size:12px;font-family:'Liberation Mono',monospace;color:#e4e4e8;">Nov 10 5:57:00.000 PM</div>
<div class="t " style="left:701.00px;top:492.41px;font-size:12px;font-family:'Liberation Mono',monospace;color:#f0f0f2;">postgresql-demo</div>
<div class="t " style="left:861.60px;top:491.41px;font-size:12px;font-family:'Liberation Mono',monospace;color:#8f9097;">info</div>
<div class="t " style="left:976.30px;top:492.41px;font-size:12px;font-family:'Liberation Mono',monospace;color:#f0f0f2;">2025-11-10 23:57:00.000 UTC,read_only_user,postgres,50914,[local],3c321.1e19,19,UPDATE,2025-11-10 23:42:00.000 UTC,7/1000,6671,…</div>
<svg class="a" style="left:509.00px;top:512.40px;" width="7.50" height="9.50" viewBox="0 0 7.5 9.5" fill="none"><polyline points="1.3,1 5.8,4.75 1.3,8.5" stroke="#c9cace" stroke-width="1.15" fill="none"/></svg>
<div class="a" style="left:524.30px;top:511.00px;width:1.00px;height:12.00px;background:#364250"></div>
<div class="t " style="left:531.00px;top:512.41px;font-size:12px;font-family:'Liberation Mono',monospace;color:#e4e4e8;">Nov 10 5:57:00.000 PM</div>
<div class="t " style="left:701.00px;top:512.41px;font-size:12px;font-family:'Liberation Mono',monospace;color:#f0f0f2;">postgresql-demo</div>
<div class="t " style="left:861.60px;top:511.41px;font-size:12px;font-family:'Liberation Mono',monospace;color:#8f9097;">info</div>
<div class="t " style="left:976.30px;top:512.41px;font-size:12px;font-family:'Liberation Mono',monospace;color:#f0f0f2;">2025-11-10 23:57:00.000 UTC,read_only_user,postgres,50914,[local],3c321.1e19,19,UPDATE,2025-11-10 23:42:00.000 UTC,7/1000,6671,…</div>
<svg class="a" style="left:509.00px;top:532.40px;" width="7.50" height="9.50" viewBox="0 0 7.5 9.5" fill="none"><polyline points="1.3,1 5.8,4.75 1.3,8.5" stroke="#c9cace" stroke-width="1.15" fill="none"/></svg>
<div class="a" style="left:524.30px;top:531.00px;width:1.00px;height:12.00px;background:#364250"></div>
<div class="t " style="left:531.00px;top:532.41px;font-size:12px;font-family:'Liberation Mono',monospace;color:#e4e4e8;">Nov 10 5:56:33.000 PM</div>
<div class="t " style="left:701.00px;top:532.41px;font-size:12px;font-family:'Liberation Mono',monospace;color:#f0f0f2;">postgresql-demo</div>
<div class="t " style="left:861.60px;top:531.41px;font-size:12px;font-family:'Liberation Mono',monospace;color:#8f9097;">info</div>
<div class="t " style="left:976.30px;top:532.41px;font-size:12px;font-family:'Liberation Mono',monospace;color:#f0f0f2;">2025-11-10 23:56:33.000 UTC,app_user,production_db,66205,[local],d3213.1b45,1,SELECT,2025-11-10 23:13:33.000 UTC,1/2260,13262,L…</div>
<svg class="a" style="left:509.00px;top:552.40px;" width="7.50" height="9.50" viewBox="0 0 7.5 9.5" fill="none"><polyline points="1.3,1 5.8,4.75 1.3,8.5" stroke="#c9cace" stroke-width="1.15" fill="none"/></svg>
<div class="a" style="left:524.30px;top:551.00px;width:1.00px;height:12.00px;background:#364250"></div>
<div class="t " style="left:531.00px;top:552.41px;font-size:12px;font-family:'Liberation Mono',monospace;color:#e4e4e8;">Nov 10 5:56:33.000 PM</div>
<div class="t " style="left:701.00px;top:552.41px;font-size:12px;font-family:'Liberation Mono',monospace;color:#f0f0f2;">postgresql-demo</div>
<div class="t " style="left:861.60px;top:551.41px;font-size:12px;font-family:'Liberation Mono',monospace;color:#8f9097;">info</div>
<div class="t " style="left:976.30px;top:552.41px;font-size:12px;font-family:'Liberation Mono',monospace;color:#f0f0f2;">2025-11-10 23:56:33.000 UTC,app_user,production_db,66205,[local],d3213.1b45,1,SELECT,2025-11-10 23:13:33.000 UTC,1/2260,13262,L…</div>
<svg class="a" style="left:509.00px;top:572.40px;" width="7.50" height="9.50" viewBox="0 0 7.5 9.5" fill="none"><polyline points="1.3,1 5.8,4.75 1.3,8.5" stroke="#c9cace" stroke-width="1.15" fill="none"/></svg>
<div class="a" style="left:524.30px;top:571.00px;width:1.00px;height:12.00px;background:#364250"></div>
<div class="t " style="left:531.00px;top:572.41px;font-size:12px;font-family:'Liberation Mono',monospace;color:#e4e4e8;">Nov 10 5:56:25.000 PM</div>
<div class="t " style="left:701.00px;top:572.41px;font-size:12px;font-family:'Liberation Mono',monospace;color:#f0f0f2;">postgresql-demo</div>
<div class="t " style="left:861.60px;top:571.41px;font-size:12px;font-family:'Liberation Mono',monospace;color:#8f9097;">info</div>
<div class="t " style="left:976.30px;top:572.41px;font-size:12px;font-family:'Liberation Mono',monospace;color:#f0f0f2;">2025-11-10 23:56:25.000 UTC,postgres,production_db,72782,10.0.231.130:51714,a5966.4b1,34,INSERT,2025-11-10 23:12:25.000 UTC,3/5…</div>
<svg class="a" style="left:509.00px;top:592.40px;" width="7.50" height="9.50" viewBox="0 0 7.5 9.5" fill="none"><polyline points="1.3,1 5.8,4.75 1.3,8.5" stroke="#c9cace" stroke-width="1.15" fill="none"/></svg>
<div class="a" style="left:524.30px;top:591.00px;width:1.00px;height:12.00px;background:#364250"></div>
<div class="t " style="left:531.00px;top:592.41px;font-size:12px;font-family:'Liberation Mono',monospace;color:#e4e4e8;">Nov 10 5:56:25.000 PM</div>
<div class="t " style="left:701.00px;top:592.41px;font-size:12px;font-family:'Liberation Mono',monospace;color:#f0f0f2;">postgresql-demo</div>
<div class="t " style="left:861.60px;top:591.41px;font-size:12px;font-family:'Liberation Mono',monospace;color:#8f9097;">info</div>
<div class="t " style="left:976.30px;top:592.41px;font-size:12px;font-family:'Liberation Mono',monospace;color:#f0f0f2;">2025-11-10 23:56:25.000 UTC,postgres,production_db,72782,10.0.231.130:51714,a5966.4b1,34,INSERT,2025-11-10 23:12:25.000 UTC,3/5…</div>
<svg class="a" style="left:509.00px;top:612.40px;" width="7.50" height="9.50" viewBox="0 0 7.5 9.5" fill="none"><polyline points="1.3,1 5.8,4.75 1.3,8.5" stroke="#c9cace" stroke-width="1.15" fill="none"/></svg>
<div class="a" style="left:524.30px;top:611.00px;width:1.00px;height:12.00px;background:#364250"></div>
<div class="t " style="left:531.00px;top:612.41px;font-size:12px;font-family:'Liberation Mono',monospace;color:#e4e4e8;">Nov 10 5:55:19.000 PM</div>
<div class="t " style="left:701.00px;top:612.41px;font-size:12px;font-family:'Liberation Mono',monospace;color:#f0f0f2;">postgresql-demo</div>
<div class="t " style="left:861.60px;top:611.41px;font-size:12px;font-family:'Liberation Mono',monospace;color:#8f9097;">info</div>
<div class="t " style="left:976.30px;top:612.41px;font-size:12px;font-family:'Liberation Mono',monospace;color:#f0f0f2;">2025-11-10 23:55:19.000 UTC,postgres,postgres,93183,[local],a84f5.25ad,14,SELECT,2025-11-10 23:34:19.000 UTC,8/7542,0,LOG,00000…</div>
<svg class="a" style="left:509.00px;top:632.40px;" width="7.50" height="9.50" viewBox="0 0 7.5 9.5" fill="none"><polyline points="1.3,1 5.8,4.75 1.3,8.5" stroke="#c9cace" stroke-width="1.15" fill="none"/></svg>
<div class="a" style="left:524.30px;top:631.00px;width:1.00px;height:12.00px;background:#364250"></div>
<div class="t " style="left:531.00px;top:632.41px;font-size:12px;font-family:'Liberation Mono',monospace;color:#e4e4e8;">Nov 10 5:55:19.000 PM</div>
<div class="t " style="left:701.00px;top:632.41px;font-size:12px;font-family:'Liberation Mono',monospace;color:#f0f0f2;">postgresql-demo</div>
<div class="t " style="left:861.60px;top:631.41px;font-size:12px;font-family:'Liberation Mono',monospace;color:#8f9097;">info</div>
<div class="t " style="left:976.30px;top:632.41px;font-size:12px;font-family:'Liberation Mono',monospace;color:#f0f0f2;">2025-11-10 23:55:19.000 UTC,postgres,postgres,93183,[local],a84f5.25ad,14,SELECT,2025-11-10 23:34:19.000 UTC,8/7542,0,LOG,00000…</div>
<svg class="a" style="left:509.00px;top:652.40px;" width="7.50" height="9.50" viewBox="0 0 7.5 9.5" fill="none"><polyline points="1.3,1 5.8,4.75 1.3,8.5" stroke="#c9cace" stroke-width="1.15" fill="none"/></svg>
<div class="a" style="left:524.30px;top:651.00px;width:1.00px;height:12.00px;background:#364250"></div>
<div class="t " style="left:531.00px;top:652.41px;font-size:12px;font-family:'Liberation Mono',monospace;color:#e4e4e8;">Nov 10 5:55:02.000 PM</div>
<div class="t " style="left:701.00px;top:652.41px;font-size:12px;font-family:'Liberation Mono',monospace;color:#f0f0f2;">postgresql-demo</div>
<div class="t " style="left:861.60px;top:651.41px;font-size:12px;font-family:'Liberation Mono',monospace;color:#8f9097;">info</div>
<div class="t " style="left:976.30px;top:652.41px;font-size:12px;font-family:'Liberation Mono',monospace;color:#f0f0f2;">2025-11-10 23:55:02.000 UTC,app_user,postgres,39756,10.0.1.168:51147,7731b.228b,40,SELECT,2025-11-10 23:11:02.000 UTC,9/6907,0,…</div>
<svg class="a" style="left:509.00px;top:672.40px;" width="7.50" height="9.50" viewBox="0 0 7.5 9.5" fill="none"><polyline points="1.3,1 5.8,4.75 1.3,8.5" stroke="#c9cace" stroke-width="1.15" fill="none"/></svg>
<div class="a" style="left:524.30px;top:671.00px;width:1.00px;height:12.00px;background:#364250"></div>
<div class="t " style="left:531.00px;top:672.41px;font-size:12px;font-family:'Liberation Mono',monospace;color:#e4e4e8;">Nov 10 5:55:02.000 PM</div>
<div class="t " style="left:701.00px;top:672.41px;font-size:12px;font-family:'Liberation Mono',monospace;color:#f0f0f2;">postgresql-demo</div>
<div class="t " style="left:861.60px;top:671.41px;font-size:12px;font-family:'Liberation Mono',monospace;color:#8f9097;">info</div>
<div class="t " style="left:976.30px;top:672.41px;font-size:12px;font-family:'Liberation Mono',monospace;color:#f0f0f2;">2025-11-10 23:55:02.000 UTC,app_user,postgres,39756,10.0.1.168:51147,7731b.228b,40,SELECT,2025-11-10 23:11:02.000 UTC,9/6907,0,…</div>
<svg class="a" style="left:509.00px;top:692.40px;" width="7.50" height="9.50" viewBox="0 0 7.5 9.5" fill="none"><polyline points="1.3,1 5.8,4.75 1.3,8.5" stroke="#c9cace" stroke-width="1.15" fill="none"/></svg>
<div class="a" style="left:524.30px;top:691.00px;width:1.00px;height:12.00px;background:#364250"></div>
<div class="t " style="left:531.00px;top:692.41px;font-size:12px;font-family:'Liberation Mono',monospace;color:#e4e4e8;">Nov 10 5:54:27.000 PM</div>
<div class="t " style="left:701.00px;top:692.41px;font-size:12px;font-family:'Liberation Mono',monospace;color:#f0f0f2;">postgresql-demo</div>
<div class="t " style="left:861.60px;top:691.41px;font-size:12px;font-family:'Liberation Mono',monospace;color:#8f9097;">info</div>
<div class="t " style="left:976.30px;top:692.41px;font-size:12px;font-family:'Liberation Mono',monospace;color:#f0f0f2;">2025-11-10 23:54:27.000 UTC,analytics_user,postgres,95118,[local],1a7c7.a79,26,UPDATE,2025-11-10 23:53:27.000 UTC,7/7301,0,LOG,…</div>
<svg class="a" style="left:509.00px;top:712.40px;" width="7.50" height="9.50" viewBox="0 0 7.5 9.5" fill="none"><polyline points="1.3,1 5.8,4.75 1.3,8.5" stroke="#c9cace" stroke-width="1.15" fill="none"/></svg>
<div class="a" style="left:524.30px;top:711.00px;width:1.00px;height:12.00px;background:#364250"></div>
<div class="t " style="left:531.00px;top:712.41px;font-size:12px;font-family:'Liberation Mono',monospace;color:#e4e4e8;">Nov 10 5:54:27.000 PM</div>
<div class="t " style="left:701.00px;top:712.41px;font-size:12px;font-family:'Liberation Mono',monospace;color:#f0f0f2;">postgresql-demo</div>
<div class="t " style="left:861.60px;top:711.41px;font-size:12px;font-family:'Liberation Mono',monospace;color:#8f9097;">info</div>
<div class="t " style="left:976.30px;top:712.41px;font-size:12px;font-family:'Liberation Mono',monospace;color:#f0f0f2;">2025-11-10 23:54:27.000 UTC,analytics_user,postgres,95118,[local],1a7c7.a79,26,UPDATE,2025-11-10 23:53:27.000 UTC,7/7301,0,LOG,…</div>
<svg class="a" style="left:509.00px;top:732.40px;" width="7.50" height="9.50" viewBox="0 0 7.5 9.5" fill="none"><polyline points="1.3,1 5.8,4.75 1.3,8.5" stroke="#c9cace" stroke-width="1.15" fill="none"/></svg>
<div class="a" style="left:524.30px;top:731.00px;width:1.00px;height:12.00px;background:#364250"></div>
<div class="t " style="left:531.00px;top:732.41px;font-size:12px;font-family:'Liberation Mono',monospace;color:#e4e4e8;">Nov 10 5:54:25.000 PM</div>
<div class="t " style="left:701.00px;top:732.41px;font-size:12px;font-family:'Liberation Mono',monospace;color:#f0f0f2;">postgresql-demo</div>
<div class="t " style="left:861.60px;top:731.41px;font-size:12px;font-family:'Liberation Mono',monospace;color:#8f9097;">info</div>
<div class="t " style="left:976.30px;top:732.41px;font-size:12px;font-family:'Liberation Mono',monospace;color:#f0f0f2;">2025-11-10 23:54:25.000 UTC,read_only_user,postgres,89615,10.0.91.70:61844,25a5a.ade,26,SELECT,2025-11-10 23:53:25.000 UTC,2/61…</div>
<svg class="a" style="left:509.00px;top:752.40px;" width="7.50" height="9.50" viewBox="0 0 7.5 9.5" fill="none"><polyline points="1.3,1 5.8,4.75 1.3,8.5" stroke="#c9cace" stroke-width="1.15" fill="none"/></svg>
<div class="a" style="left:524.30px;top:751.00px;width:1.00px;height:12.00px;background:#364250"></div>
<div class="t " style="left:531.00px;top:752.41px;font-size:12px;font-family:'Liberation Mono',monospace;color:#e4e4e8;">Nov 10 5:54:25.000 PM</div>
<div class="t " style="left:701.00px;top:752.41px;font-size:12px;font-family:'Liberation Mono',monospace;color:#f0f0f2;">postgresql-demo</div>
<div class="t " style="left:861.60px;top:751.41px;font-size:12px;font-family:'Liberation Mono',monospace;color:#8f9097;">info</div>
<div class="t " style="left:976.30px;top:752.41px;font-size:12px;font-family:'Liberation Mono',monospace;color:#f0f0f2;">2025-11-10 23:54:25.000 UTC,read_only_user,postgres,89615,10.0.91.70:61844,25a5a.ade,26,SELECT,2025-11-10 23:53:25.000 UTC,2/61…</div>
<svg class="a" style="left:509.00px;top:772.40px;" width="7.50" height="9.50" viewBox="0 0 7.5 9.5" fill="none"><polyline points="1.3,1 5.8,4.75 1.3,8.5" stroke="#c9cace" stroke-width="1.15" fill="none"/></svg>
<div class="a" style="left:524.30px;top:771.00px;width:1.00px;height:12.00px;background:#364250"></div>
<div class="t " style="left:531.00px;top:772.41px;font-size:12px;font-family:'Liberation Mono',monospace;color:#e4e4e8;">Nov 10 5:53:41.000 PM</div>
<div class="t " style="left:701.00px;top:772.41px;font-size:12px;font-family:'Liberation Mono',monospace;color:#f0f0f2;">postgresql-demo</div>
<div class="t " style="left:861.60px;top:771.41px;font-size:12px;font-family:'Liberation Mono',monospace;color:#8f9097;">info</div>
<div class="t " style="left:976.30px;top:772.41px;font-size:12px;font-family:'Liberation Mono',monospace;color:#f0f0f2;">2025-11-10 23:53:41.000 UTC,postgres,production_db,24562,[local],ba040.58a,16,INSERT,2025-11-10 23:33:41.000 UTC,2/161,0,LOG,00…</div>
<svg class="a" style="left:509.00px;top:792.40px;" width="7.50" height="9.50" viewBox="0 0 7.5 9.5" fill="none"><polyline points="1.3,1 5.8,4.75 1.3,8.5" stroke="#c9cace" stroke-width="1.15" fill="none"/></svg>
<div class="a" style="left:524.30px;top:791.00px;width:1.00px;height:12.00px;background:#364250"></div>
<div class="t " style="left:531.00px;top:792.41px;font-size:12px;font-family:'Liberation Mono',monospace;color:#e4e4e8;">Nov 10 5:53:41.000 PM</div>
<div class="t " style="left:701.00px;top:792.41px;font-size:12px;font-family:'Liberation Mono',monospace;color:#f0f0f2;">postgresql-demo</div>
<div class="t " style="left:861.60px;top:791.41px;font-size:12px;font-family:'Liberation Mono',monospace;color:#8f9097;">info</div>
<div class="t " style="left:976.30px;top:792.41px;font-size:12px;font-family:'Liberation Mono',monospace;color:#f0f0f2;">2025-11-10 23:53:41.000 UTC,postgres,production_db,24562,[local],ba040.58a,16,INSERT,2025-11-10 23:33:41.000 UTC,2/161,0,LOG,00…</div>
<svg class="a" style="left:509.00px;top:812.40px;" width="7.50" height="9.50" viewBox="0 0 7.5 9.5" fill="none"><polyline points="1.3,1 5.8,4.75 1.3,8.5" stroke="#c9cace" stroke-width="1.15" fill="none"/></svg>
<div class="a" style="left:524.30px;top:811.00px;width:1.00px;height:12.00px;background:#364250"></div>
<div class="t " style="left:531.00px;top:812.41px;font-size:12px;font-family:'Liberation Mono',monospace;color:#e4e4e8;">Nov 10 5:53:00.000 PM</div>
<div class="t " style="left:701.00px;top:812.41px;font-size:12px;font-family:'Liberation Mono',monospace;color:#f0f0f2;">postgresql-demo</div>
<div class="t " style="left:861.60px;top:811.41px;font-size:12px;font-family:'Liberation Mono',monospace;color:#8f9097;">info</div>
<div class="t " style="left:976.30px;top:812.41px;font-size:12px;font-family:'Liberation Mono',monospace;color:#f0f0f2;">2025-11-10 23:53:00.000 UTC,app_user,production_db,82152,[local],8cc0b.2671,3,INSERT,2025-11-10 23:07:00.000 UTC,7/341,64629,LO…</div>
<svg class="a" style="left:509.00px;top:832.40px;" width="7.50" height="9.50" viewBox="0 0 7.5 9.5" fill="none"><polyline points="1.3,1 5.8,4.75 1.3,8.5" stroke="#c9cace" stroke-width="1.15" fill="none"/></svg>
<div class="a" style="left:524.30px;top:831.00px;width:1.00px;height:12.00px;background:#364250"></div>
<div class="t " style="left:531.00px;top:832.41px;font-size:12px;font-family:'Liberation Mono',monospace;color:#e4e4e8;">Nov 10 5:53:00.000 PM</div>
<div class="t " style="left:701.00px;top:832.41px;font-size:12px;font-family:'Liberation Mono',monospace;color:#f0f0f2;">postgresql-demo</div>
<div class="t " style="left:861.60px;top:831.41px;font-size:12px;font-family:'Liberation Mono',monospace;color:#8f9097;">info</div>
<div class="t " style="left:976.30px;top:832.41px;font-size:12px;font-family:'Liberation Mono',monospace;color:#f0f0f2;">2025-11-10 23:53:00.000 UTC,app_user,production_db,82152,[local],8cc0b.2671,3,INSERT,2025-11-10 23:07:00.000 UTC,7/341,64629,LO…</div>
<svg class="a" style="left:509.00px;top:852.40px;" width="7.50" height="9.50" viewBox="0 0 7.5 9.5" fill="none"><polyline points="1.3,1 5.8,4.75 1.3,8.5" stroke="#c9cace" stroke-width="1.15" fill="none"/></svg>
<div class="a" style="left:524.30px;top:851.00px;width:1.00px;height:12.00px;background:#364250"></div>
<div class="t " style="left:531.00px;top:852.41px;font-size:12px;font-family:'Liberation Mono',monospace;color:#e4e4e8;">Nov 10 5:52:16.000 PM</div>
<div class="t " style="left:701.00px;top:852.41px;font-size:12px;font-family:'Liberation Mono',monospace;color:#f0f0f2;">postgresql-demo</div>
<div class="t " style="left:861.60px;top:851.41px;font-size:12px;font-family:'Liberation Mono',monospace;color:#8f9097;">info</div>
<div class="t " style="left:976.30px;top:852.41px;font-size:12px;font-family:'Liberation Mono',monospace;color:#f0f0f2;">2025-11-10 23:52:16.000 UTC,app_user,production_db,95299,[local],4263b.2029,35,UPDATE,2025-11-10 23:06:16.000 UTC,2/8275,0,LOG,…</div>
<svg class="a" style="left:509.00px;top:872.40px;" width="7.50" height="9.50" viewBox="0 0 7.5 9.5" fill="none"><polyline points="1.3,1 5.8,4.75 1.3,8.5" stroke="#c9cace" stroke-width="1.15" fill="none"/></svg>
<div class="a" style="left:524.30px;top:871.00px;width:1.00px;height:12.00px;background:#364250"></div>
<div class="t " style="left:531.00px;top:872.41px;font-size:12px;font-family:'Liberation Mono',monospace;color:#e4e4e8;">Nov 10 5:52:16.000 PM</div>
<div class="t " style="left:701.00px;top:872.41px;font-size:12px;font-family:'Liberation Mono',monospace;color:#f0f0f2;">postgresql-demo</div>
<div class="t " style="left:861.60px;top:871.41px;font-size:12px;font-family:'Liberation Mono',monospace;color:#8f9097;">info</div>
<div class="t " style="left:976.30px;top:872.41px;font-size:12px;font-family:'Liberation Mono',monospace;color:#f0f0f2;">2025-11-10 23:52:16.000 UTC,app_user,production_db,95299,[local],4263b.2029,35,UPDATE,2025-11-10 23:06:16.000 UTC,2/8275,0,LOG,…</div>
<svg class="a" style="left:509.00px;top:892.40px;" width="7.50" height="9.50" viewBox="0 0 7.5 9.5" fill="none"><polyline points="1.3,1 5.8,4.75 1.3,8.5" stroke="#c9cace" stroke-width="1.15" fill="none"/></svg>
<div class="a" style="left:524.30px;top:891.00px;width:1.00px;height:12.00px;background:#364250"></div>
<div class="t " style="left:531.00px;top:892.41px;font-size:12px;font-family:'Liberation Mono',monospace;color:#e4e4e8;">Nov 10 5:52:01.000 PM</div>
<div class="t " style="left:701.00px;top:892.41px;font-size:12px;font-family:'Liberation Mono',monospace;color:#f0f0f2;">postgresql-demo</div>
<div class="t " style="left:861.60px;top:891.41px;font-size:12px;font-family:'Liberation Mono',monospace;color:#8f9097;">info</div>
<div class="t " style="left:976.30px;top:892.41px;font-size:12px;font-family:'Liberation Mono',monospace;color:#f0f0f2;">2025-11-10 23:52:01.000 UTC,analytics_user,postgres,73825,[local],650af.18e8,39,SELECT,2025-11-10 23:19:01.000 UTC,6/3068,0,LOG…</div>
<svg class="a" style="left:509.00px;top:912.40px;" width="7.50" height="9.50" viewBox="0 0 7.5 9.5" fill="none"><polyline points="1.3,1 5.8,4.75 1.3,8.5" stroke="#c9cace" stroke-width="1.15" fill="none"/></svg>
<div class="a" style="left:524.30px;top:911.00px;width:1.00px;height:12.00px;background:#364250"></div>
<div class="t " style="left:531.00px;top:912.41px;font-size:12px;font-family:'Liberation Mono',monospace;color:#e4e4e8;">Nov 10 5:52:01.000 PM</div>
<div class="t " style="left:701.00px;top:912.41px;font-size:12px;font-family:'Liberation Mono',monospace;color:#f0f0f2;">postgresql-demo</div>
<div class="t " style="left:861.60px;top:911.41px;font-size:12px;font-family:'Liberation Mono',monospace;color:#8f9097;">info</div>
<div class="t " style="left:976.30px;top:912.41px;font-size:12px;font-family:'Liberation Mono',monospace;color:#f0f0f2;">2025-11-10 23:52:01.000 UTC,analytics_user,postgres,73825,[local],650af.18e8,39,SELECT,2025-11-10 23:19:01.000 UTC,6/3068,0,LOG…</div>
<svg class="a" style="left:509.00px;top:932.40px;" width="7.50" height="9.50" viewBox="0 0 7.5 9.5" fill="none"><polyline points="1.3,1 5.8,4.75 1.3,8.5" stroke="#c9cace" stroke-width="1.15" fill="none"/></svg>
<div class="a" style="left:524.30px;top:931.00px;width:1.00px;height:12.00px;background:#364250"></div>
<div class="t " style="left:531.00px;top:932.41px;font-size:12px;font-family:'Liberation Mono',monospace;color:#e4e4e8;">Nov 10 5:51:55.000 PM</div>
<div class="t " style="left:701.00px;top:932.41px;font-size:12px;font-family:'Liberation Mono',monospace;color:#f0f0f2;">postgresql-demo</div>
<div class="t " style="left:861.60px;top:931.41px;font-size:12px;font-family:'Liberation Mono',monospace;color:#8f9097;">info</div>
<div class="t " style="left:976.30px;top:932.41px;font-size:12px;font-family:'Liberation Mono',monospace;color:#f0f0f2;">2025-11-10 23:51:55.000 UTC,app_user,analytics_db,36681,[local],863c4.2402,26,UPDATE,2025-11-10 23:25:55.000 UTC,3/2626,13539,L…</div>
<svg class="a" style="left:509.00px;top:952.40px;" width="7.50" height="9.50" viewBox="0 0 7.5 9.5" fill="none"><polyline points="1.3,1 5.8,4.75 1.3,8.5" stroke="#c9cace" stroke-width="1.15" fill="none"/></svg>
<div class="a" style="left:524.30px;top:951.00px;width:1.00px;height:12.00px;background:#364250"></div>
<div class="t " style="left:531.00px;top:952.41px;font-size:12px;font-family:'Liberation Mono',monospace;color:#e4e4e8;">Nov 10 5:51:55.000 PM</div>
<div class="t " style="left:701.00px;top:952.41px;font-size:12px;font-family:'Liberation Mono',monospace;color:#f0f0f2;">postgresql-demo</div>
<div class="t " style="left:861.60px;top:951.41px;font-size:12px;font-family:'Liberation Mono',monospace;color:#8f9097;">info</div>
<div class="t " style="left:976.30px;top:952.41px;font-size:12px;font-family:'Liberation Mono',monospace;color:#f0f0f2;">2025-11-10 23:51:55.000 UTC,app_user,analytics_db,36681,[local],863c4.2402,26,UPDATE,2025-11-10 23:25:55.000 UTC,3/2626,13539,L…</div>
</div></body></html>
